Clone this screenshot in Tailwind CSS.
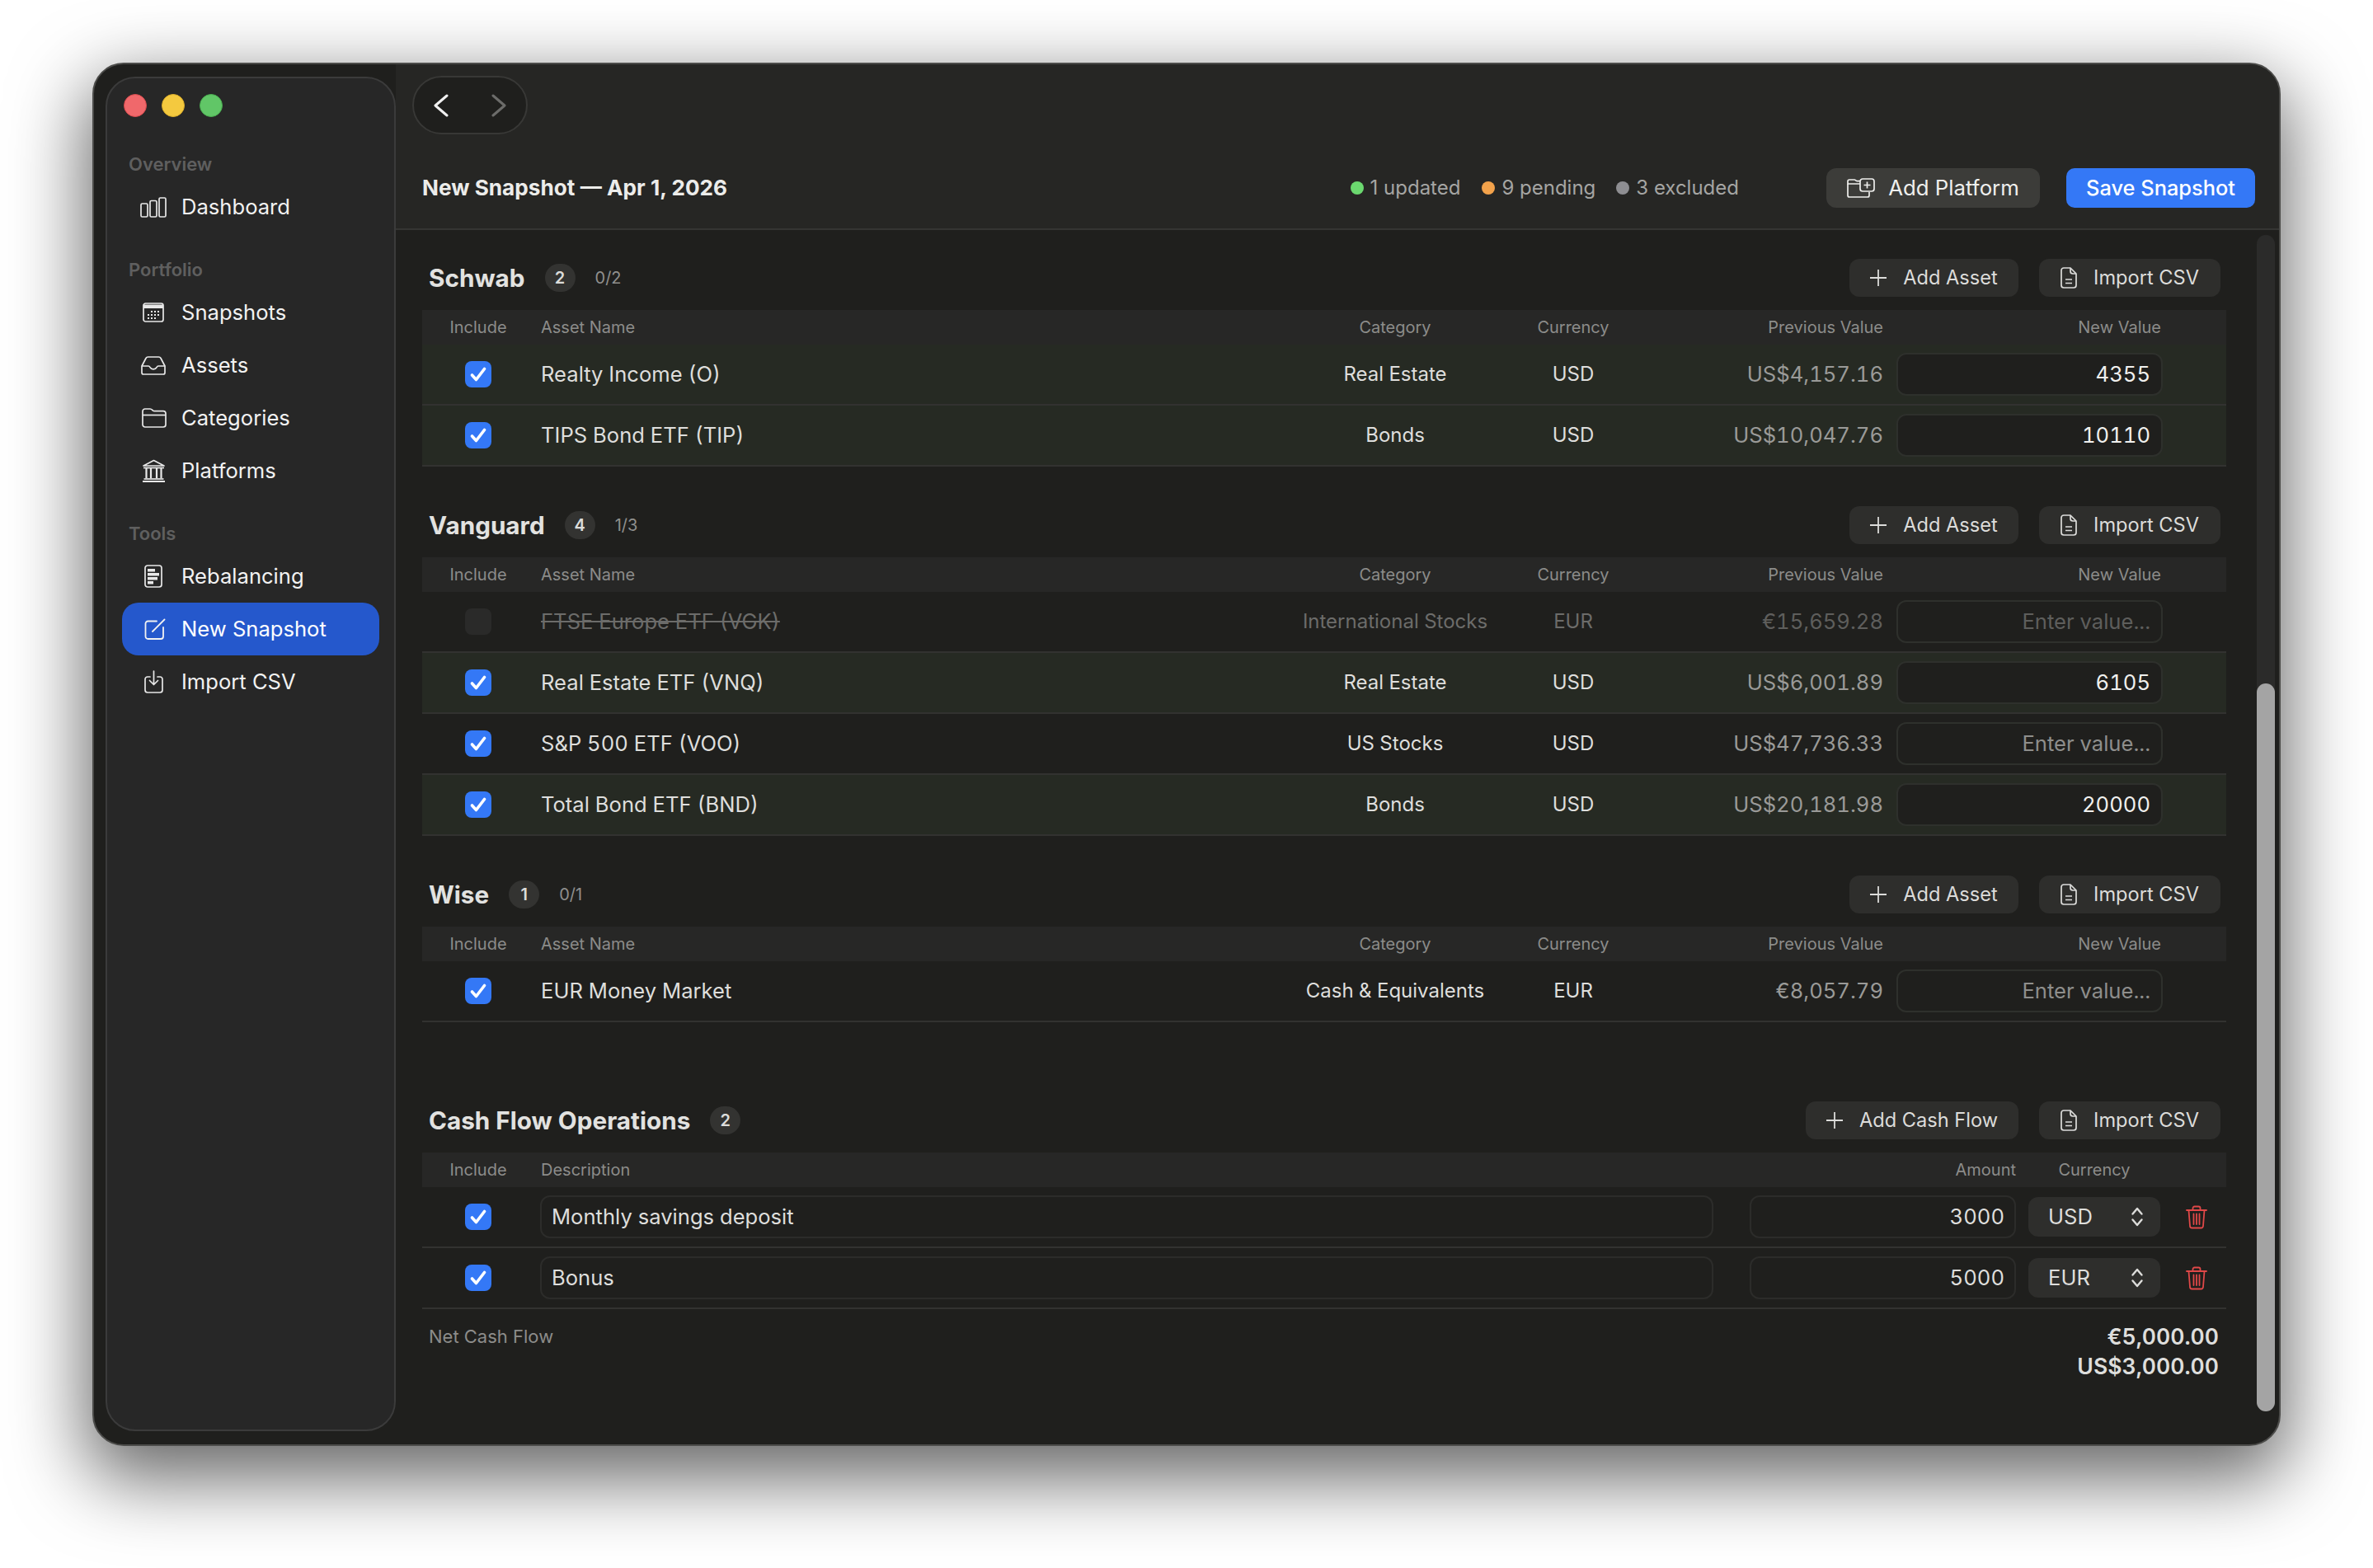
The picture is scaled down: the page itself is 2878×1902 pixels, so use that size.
<!DOCTYPE html>
<html lang="en">
<head>
<meta charset="UTF-8">
<title>New Snapshot</title>
<script src="https://cdn.jsdelivr.net/npm/@tailwindcss/browser@4"></script>
</head>
<body class="bg-white font-[family-name:Inter,sans-serif] antialiased">
<div class="w-[2878px] h-[1902px] pt-[76px] pl-[112px] overflow-hidden">
  <!-- window -->
  <div class="relative w-[2654px] h-[1678px] flex rounded-[38px] bg-[#1f1f1d] border-2 border-[#4c4c4a] shadow-[0_32px_90px_8px_rgba(0,0,0,0.6)] overflow-hidden">

    <!-- sidebar -->
    <aside class="w-[352px] shrink-0 mt-[15px] mb-[16px] ml-[14px] rounded-[36px] bg-[#272727] border-2 border-[#3b3b3b] px-[18px]">
      <div class="flex gap-[18px] pt-[19px] pl-[2px]">
        <span class="w-[28px] h-[28px] rounded-full bg-[#f0686b] border border-[#d94b4e]"></span>
        <span class="w-[28px] h-[28px] rounded-full bg-[#f4c93f] border border-[#dcae2a]"></span>
        <span class="w-[28px] h-[28px] rounded-full bg-[#61c667] border border-[#4aad50]"></span>
      </div>
      <p class="mt-[43px] pl-[8px] h-[28px] leading-[28px] text-[22px] font-semibold text-[#5f5f5f]">Overview</p>
      <a class="flex items-center h-[64px] mt-[6px] text-[#f2f2f2] text-[25.6px]"><span class="w-[72px] pl-[22px]">
        <svg width="32" height="25" viewBox="0 0 32 25" fill="none" stroke="#e8e8e8" stroke-width="1.7"><rect x="1" y="8" width="8" height="16" rx="1.5"/><rect x="12" y="4.5" width="8" height="19.5" rx="1.5"/><rect x="23" y="1" width="8" height="23" rx="1.5"/></svg></span>Dashboard</a>

      <p class="mt-[30px] pl-[8px] h-[28px] leading-[28px] text-[22px] font-semibold text-[#5f5f5f]">Portfolio</p>
      <a class="flex items-center h-[64px] mt-[6px] text-[#f2f2f2] text-[25.6px]"><span class="w-[72px] pl-[25px]">
        <svg width="26" height="24" viewBox="0 0 26 24" fill="none"><rect x="1" y="1" width="24" height="22" rx="2.5" stroke="#e8e8e8" stroke-width="1.7"/><path d="M1 2.5h24v4.5H1z" fill="#e8e8e8"/><g fill="#e8e8e8"><rect x="10" y="10" width="2" height="2"/><rect x="14" y="10" width="2" height="2"/><rect x="18" y="10" width="2" height="2"/><rect x="6" y="14" width="2" height="2"/><rect x="10" y="14" width="2" height="2"/><rect x="14" y="14" width="2" height="2"/><rect x="18" y="14" width="2" height="2"/><rect x="6" y="18" width="2" height="2"/><rect x="10" y="18" width="2" height="2"/><rect x="14" y="18" width="2" height="2"/></g></svg></span>Snapshots</a>
      <a class="flex items-center h-[64px] text-[#f2f2f2] text-[25.6px]"><span class="w-[72px] pl-[23px]">
        <svg width="30" height="23" viewBox="0 0 30 23" fill="none" stroke="#e8e8e8" stroke-width="1.7" stroke-linejoin="round"><path d="M1 12 6 2.5A3 3 0 0 1 8.5 1h13A3 3 0 0 1 24 2.5L29 12v8a2 2 0 0 1-2 2H3a2 2 0 0 1-2-2z"/><path d="M1 12h8c1 0 1.500.7 2 1.600.8 1.500 2.200 2.200 4 2.200s3.200-.7 4-2.200c.5-.9 1-1.600 2-1.600h8"/></svg></span>Assets</a>
      <a class="flex items-center h-[64px] text-[#f2f2f2] text-[25.6px]"><span class="w-[72px] pl-[24px]">
        <svg width="30" height="24" viewBox="0 0 30 24" fill="none" stroke="#e8e8e8" stroke-width="1.7" stroke-linejoin="round"><path d="M1 4a3 3 0 0 1 3-3h6c1.500 0 2 .6 3 1.600.7.700 1.200 1.100 2.500 1.100H26a3 3 0 0 1 3 3V20a3 3 0 0 1-3 3H4a3 3 0 0 1-3-3z"/><path d="M1 8.500h28"/></svg></span>Categories</a>
      <a class="flex items-center h-[64px] text-[#f2f2f2] text-[25.6px]"><span class="w-[72px] pl-[24px]">
        <svg width="29" height="28" viewBox="0 0 29 28" fill="none" stroke="#e8e8e8" stroke-width="1.700"><path d="M2 8 14.500 1.500 27 8z" stroke-linejoin="round"/><path d="M2 10.500h25"/><path d="M5.500 11v12M11 11v12M18 11v12M23.500 11v12" stroke-width="2.200"/><path d="M2.500 24h24"/><path d="M1 27h27" stroke-width="2"/></svg></span>Platforms</a>

      <p class="mt-[30px] pl-[8px] h-[28px] leading-[28px] text-[22px] font-semibold text-[#5f5f5f]">Tools</p>
      <a class="flex items-center h-[64px] mt-[6px] text-[#f2f2f2] text-[25.6px]"><span class="w-[72px] pl-[27px]">
        <svg width="22" height="28" viewBox="0 0 22 28" fill="none"><rect x="1" y="1" width="20" height="26" rx="3" stroke="#e8e8e8" stroke-width="1.700"/><g fill="#e8e8e8"><rect x="4" y="5" width="9" height="3.500"/><rect x="4" y="10" width="14" height="3.500"/><rect x="4" y="15" width="12" height="3.500"/><rect x="4" y="20" width="7" height="3.500"/></g></svg></span>Rebalancing</a>
      <a class="flex items-center h-[64px] bg-[#2558cc] rounded-[20px] text-white text-[25.6px]"><span class="w-[72px] pl-[27px]">
        <svg width="26" height="26" viewBox="0 0 26 26" fill="none" stroke="#f2f2f2" stroke-width="1.800" stroke-linecap="round"><path d="M15 3.500H4.500a3 3 0 0 0-3 3V22a3 3 0 0 0 3 3H20a3 3 0 0 0 3-3V11"/><path d="M10 16 24.500 1.500"/></svg></span>New Snapshot</a>
      <a class="flex items-center h-[64px] text-[#f2f2f2] text-[25.6px]"><span class="w-[72px] pl-[27px]">
        <svg width="23" height="28" viewBox="0 0 23 28" fill="none" stroke="#e8e8e8" stroke-width="1.700" stroke-linecap="round" stroke-linejoin="round"><path d="M7 8H4a3 3 0 0 0-3 3v13a3 3 0 0 0 3 3h15a3 3 0 0 0 3-3V11a3 3 0 0 0-3-3h-3"/><path d="M11.500 1v16M6.500 12.500l5 5 5-5"/></svg></span>Import CSV</a>
    </aside>

    <!-- main column -->
    <main class="flex-1 min-w-0 flex flex-col">
      <header class="h-[201px] shrink-0 bg-[#262624] border-b-2 border-[#353533] pl-[32px] pr-[29px] pt-[14px]">
        <div class="-ml-[12px] w-[140px] h-[71px] rounded-full bg-[#1f1f1d] border-2 border-[#383836] flex items-center justify-between px-[24px]">
          <svg width="18" height="28" viewBox="0 0 18 28" fill="none" stroke="#f0f0f0" stroke-width="3" stroke-linecap="round" stroke-linejoin="round"><path d="M16 2 2 14l14 12"/></svg>
          <svg width="18" height="28" viewBox="0 0 18 28" fill="none" stroke="#6c6c6a" stroke-width="3" stroke-linecap="round" stroke-linejoin="round"><path d="M2 2l14 12L2 26"/></svg>
        </div>
        <div class="mt-[41px] h-[48px] flex items-center">
          <h1 class="text-[26.2px] font-bold text-[#ececea]">New Snapshot — Apr 1, 2026</h1>
          <div class="ml-auto flex items-center text-[24px] text-[#a5a5a3]">
            <span class="w-[16px] h-[16px] rounded-full bg-[#6bd86f]"></span><span class="ml-[8px]">1 updated</span>
            <span class="ml-[26px] w-[16px] h-[16px] rounded-full bg-[#f2a24b]"></span><span class="ml-[8px]">9 pending</span>
            <span class="ml-[25px] w-[16px] h-[16px] rounded-full bg-[#8e8e92]"></span><span class="ml-[8px]">3 excluded</span>
          </div>
          <button class="ml-[106px] h-[48px] w-[259px] rounded-[12px] bg-[#3c3c39] flex items-center justify-center gap-[16px] text-[25.8px] text-[#efefed]">
            <svg width="34" height="24" viewBox="0 0 34 24" fill="none" stroke="#eeeeec" stroke-width="1.700" stroke-linejoin="round"><path d="M16 7H1V4a2 2 0 0 1 2-2h6c1.500 0 2 1.700 3.500 1.700H16"/><path d="M1 7v14a2 2 0 0 0 2 2h22a2 2 0 0 0 2-2v-4"/><rect x="16" y="1" width="17" height="15" rx="3"/><path d="M24.500 4.500v8M20.500 8.500h8"/></svg>
            Add Platform
          </button>
          <button class="ml-[32px] h-[48px] w-[229px] rounded-[10px] bg-[#3478f6] text-[25.4px] font-medium text-white">Save Snapshot</button>
        </div>
      </header>

      <div class="relative flex-1 min-h-0 pl-[32px] pr-[61px]">
        <div id="sections"></div>

        <!-- scrollbar over the content -->
        <div class="absolute top-[6px] bottom-[40px] right-[5px] w-[22px] rounded-full bg-[#2b2b2a]">
          <div class="absolute left-0 right-0 bottom-0 top-[544px] rounded-full bg-[#a4a4a4]"></div>
        </div>
      </div>
    </main>
  </div>
</div>

<script>
  const plus = '<svg width="20" height="20" viewBox="0 0 20 20" stroke="#dcdcda" stroke-width="1.800"><path d="M10 0v20M0 10h20"/></svg>';
  const doc = '<svg width="20" height="26" viewBox="0 0 20 26" fill="none" stroke="#dcdcda" stroke-width="1.700" stroke-linejoin="round"><path d="M12 1H4a3 3 0 0 0-3 3v18a3 3 0 0 0 3 3h12a3 3 0 0 0 3-3V8z"/><path d="M12 1v4a3 3 0 0 0 3 3h4"/><path d="M6 15h8M6 19.500h8"/></svg>';
  const check = '<span class="w-[32px] h-[32px] rounded-[8px] bg-[#3478f6] flex items-center justify-center"><svg width="20" height="18" viewBox="0 0 20 18" fill="none" stroke="#fff" stroke-width="3.600" stroke-linecap="round" stroke-linejoin="round"><path d="M2.500 10l5 5.500L17.500 2.500"/></svg></span>';
  const off = '<span class="w-[32px] h-[32px] rounded-[8px] bg-[#2a2a29]"></span>';
  const trash = '<svg width="26" height="29" viewBox="0 0 26 29" fill="none" stroke="#e04848" stroke-width="1.800" stroke-linecap="round" stroke-linejoin="round"><path d="M1 6h24"/><path d="M8.500 6V3.500a2 2 0 0 1 2-2h5a2 2 0 0 1 2 2V6"/><path d="M3.500 6l1.500 19a2.500 2.500 0 0 0 2.500 2.500h11A2.500 2.500 0 0 0 21 25l1.500-19"/><path d="M9.500 10.500V23M13 10.500V23M16.500 10.500V23"/></svg>';
  const updown = '<svg width="16" height="26" viewBox="0 0 16 26" fill="none" stroke="#dcdcda" stroke-width="2.400" stroke-linecap="round" stroke-linejoin="round"><path d="M2.500 9.500 8 3l5.500 6.500M2.500 16.500 8 23l5.500-6.500"/></svg>';

  function btn(icon, label, w) {
    return `<button class="h-[46px] ${w} rounded-[12px] bg-[#2e2e2c] flex items-center justify-center gap-[20px] text-[23.6px] text-[#dcdcda]">${icon}${label}</button>`;
  }

  function title(name, count, progress) {
    return `<div class="flex items-center gap-[24px]">
      <h2 class="text-[29.7px] leading-[46px] font-bold text-[#e2e2e0]">${name}</h2>
      <span class="h-[34px] min-w-[37px] rounded-full bg-[#333331] flex items-center justify-center text-[20px] font-semibold text-[#dcdcda]">${count}</span>
      ${progress ? `<span class="text-[20px] text-[#8f8f8d]">${progress}</span>` : ''}
    </div>`;
  }

  function assetRow(a) {
    const updated = a.value != null;
    const excluded = a.excluded;
    const bg = updated ? 'bg-[#262a23]' : '';
    const name = excluded ? 'line-through text-[#6c6c6a]' : 'text-[#dededc]';
    const cat = excluded ? 'text-[#6c6c6a]' : 'text-[#dededc]';
    const prev = excluded ? 'text-[#5e5e5c]' : 'text-[#9a9a98]';
    const input = updated
      ? `<span class="text-[#f0f0ee]">${a.value}</span>`
      : `<span class="${excluded ? 'text-[#5e5e5c]' : 'text-[#8e8e8c]'}">Enter value...</span>`;
    return `<div class="h-[74px] grid grid-cols-[136px_904px_280px_152px_300px_324px_92px] items-center border-b-2 border-[#323230] text-[25.6px] tabular-nums ${bg}">
      <div class="flex justify-center">${excluded ? off : check}</div>
      <div class="pl-[8px] ${name}">${a.name}</div>
      <div class="text-center text-[24px] ${cat}">${a.cat}</div>
      <div class="text-center text-[24px] ${cat}">${a.cur}</div>
      <div class="text-right ${prev}">${a.prev}</div>
      <div class="ml-[16px] h-[52px] w-[323px] rounded-[12px] bg-[#1f1f1d] border-2 border-[#2e302c] flex items-center justify-end pr-[13px]">${input}</div>
    </div>`;
  }

  function section(s, top) {
    const rows = s.assets.map(assetRow).join('');
    return `<section class="${top}">
      <div class="flex items-center justify-between h-[46px] pl-[8px] pr-[10px]">
        ${title(s.name, s.assets.length, s.progress)}
        <div class="flex gap-[25px]">${btn(plus, 'Add Asset', 'w-[205px]')}${btn(doc, 'Import CSV', 'w-[220px]')}</div>
      </div>
      <div class="mt-[16px] w-[2188px]">
        <div class="h-[42px] grid grid-cols-[136px_904px_280px_152px_300px_337px_79px] items-center bg-[#272726] text-[20px] text-[#8c8c8a]">
          <div class="text-center">Include</div>
          <div class="pl-[8px]">Asset Name</div>
          <div class="text-center">Category</div>
          <div class="text-center">Currency</div>
          <div class="text-right">Previous Value</div>
          <div class="text-right">New Value</div>
        </div>
        ${rows}
      </div>
    </section>`;
  }

  function cashRow(desc, amt, cur) {
    return `<div class="h-[74px] flex items-center border-b-2 border-[#323230] text-[25.6px] tabular-nums">
      <div class="w-[136px] flex justify-center">${check}</div>
      <div class="ml-[7px] w-[1423px] h-[52px] rounded-[12px] border-2 border-[#2c2c2a] flex items-center pl-[12px] text-[#dededc]">${desc}</div>
      <div class="ml-[44px] w-[323px] h-[52px] rounded-[12px] border-2 border-[#2c2c2a] flex items-center justify-end pr-[12px] text-[#dededc]">${amt}</div>
      <div class="ml-[15px] w-[160px] h-[48px] rounded-[12px] bg-[#2e2e2c] flex items-center justify-between pl-[24px] pr-[20px] text-[#dededc]">${cur}${updown}</div>
      <div class="ml-[31px]">${trash}</div>
    </div>`;
  }

  const data = [
    { name: 'Schwab', progress: '0/2', assets: [
      { name: 'Realty Income (O)', cat: 'Real Estate', cur: 'USD', prev: 'US$4,157.16', value: '4355' },
      { name: 'TIPS Bond ETF (TIP)', cat: 'Bonds', cur: 'USD', prev: 'US$10,047.76', value: '10110' },
    ]},
    { name: 'Vanguard', progress: '1/3', assets: [
      { name: 'FTSE Europe ETF (VGK)', cat: 'International Stocks', cur: 'EUR', prev: '€15,659.28', excluded: true },
      { name: 'Real Estate ETF (VNQ)', cat: 'Real Estate', cur: 'USD', prev: 'US$6,001.89', value: '6105' },
      { name: 'S&amp;P 500 ETF (VOO)', cat: 'US Stocks', cur: 'USD', prev: 'US$47,736.33' },
      { name: 'Total Bond ETF (BND)', cat: 'Bonds', cur: 'USD', prev: 'US$20,181.98', value: '20000' },
    ]},
    { name: 'Wise', progress: '0/1', assets: [
      { name: 'EUR Money Market', cat: 'Cash &amp; Equivalents', cur: 'EUR', prev: '€8,057.79' },
    ]},
  ];

  let html = section(data[0], 'pt-[35px]') + section(data[1], 'mt-[48px]') + section(data[2], 'mt-[48px]');
  html += `<section class="mt-[96px]">
    <div class="flex items-center justify-between h-[46px] pl-[8px] pr-[10px]">
      ${title('Cash Flow Operations', 2)}
      <div class="flex gap-[25px]">${btn(plus, 'Add Cash Flow', 'w-[258px]')}${btn(doc, 'Import CSV', 'w-[220px]')}</div>
    </div>
    <div class="mt-[16px] w-[2188px]">
      <div class="h-[42px] flex items-center bg-[#272726] text-[20px] text-[#8c8c8a]">
        <div class="w-[136px] text-center">Include</div>
        <div class="pl-[8px] flex-1">Description</div>
        <div class="mr-[15px]">Amount</div>
        <div class="w-[160px] text-center mr-[80px]">Currency</div>
      </div>
      ${cashRow('Monthly savings deposit', '3000', 'USD')}
      ${cashRow('Bonus', '5000', 'EUR')}
      <div class="flex justify-between pl-[8px] pr-[9px] pt-[15px]">
        <span class="text-[22px] leading-[36px] text-[#8c8c8a]">Net Cash Flow</span>
        <div class="text-right text-[26.6px] leading-[36px] font-semibold tabular-nums text-[#dededc]"><p>€5,000.00</p><p>US$3,000.00</p></div>
      </div>
    </div>
  </section>`;
  document.getElementById('sections').innerHTML = html;
</script>
</body>
</html>
